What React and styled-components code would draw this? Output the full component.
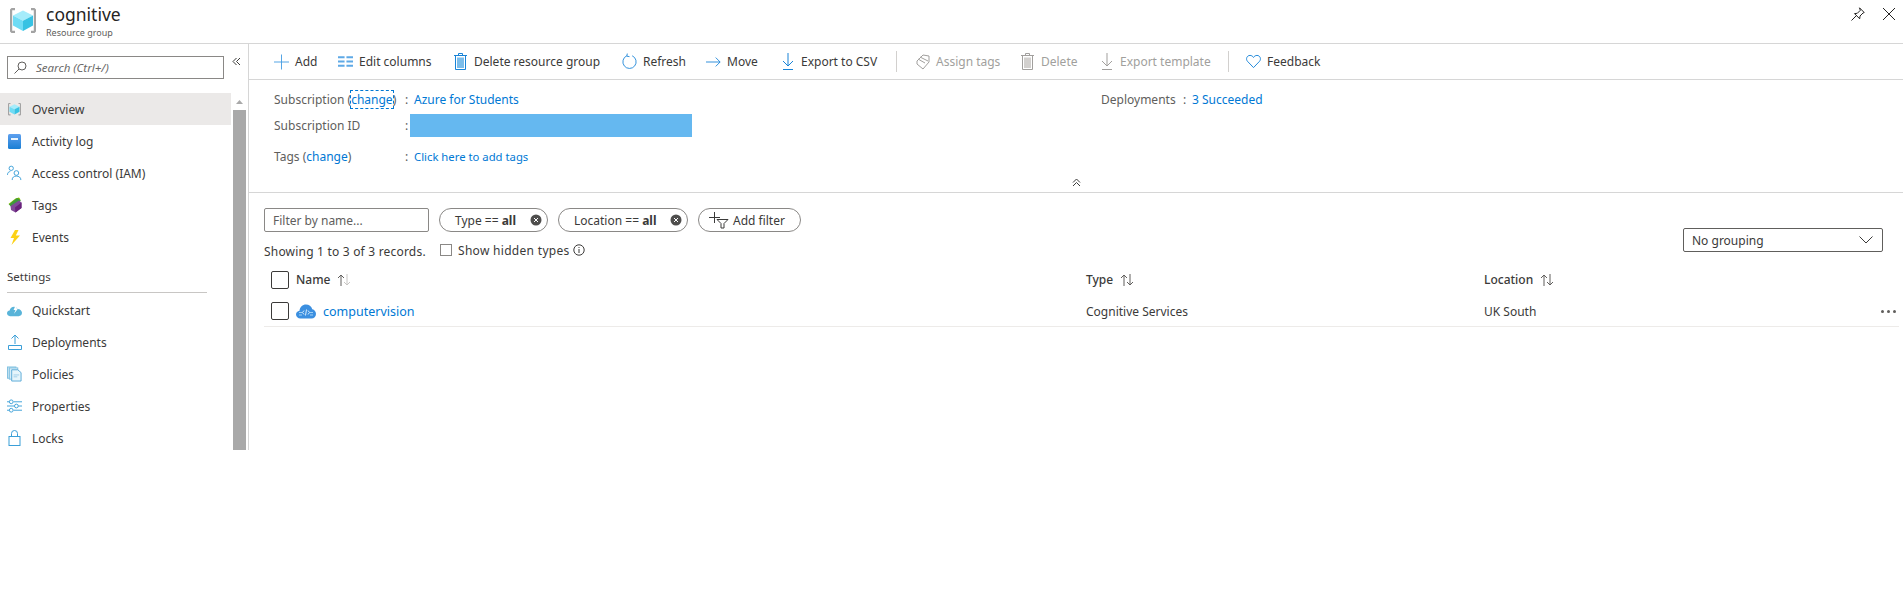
import React from "react";
import styled, { createGlobalStyle } from "styled-components";

const BLUE = "#0078d4";
const ICON = "#1883d7";

const GlobalStyle = createGlobalStyle`
  html, body {
    margin: 0;
    padding: 0;
    background: #fff;
    font-family: "Noto Sans", "Open Sans", sans-serif;
    font-size: 12px;
    color: #3b3a39;
  }
  * { box-sizing: border-box; }
`;

const Page = styled.div`
  width: 1903px;
  height: 600px;
  overflow: hidden;
`;

const Header = styled.header`
  height: 44px;
  display: flex;
  align-items: flex-start;
  padding: 7px 7px 0 8px;
  border-bottom: 1px solid #d6d6d6;
`;

const TitleBlock = styled.div`
  margin-left: 8px;
  margin-top: -4px;
  flex: 1;
`;

const Title = styled.div`
  font-size: 17.5px;
  line-height: 23px;
  color: #252423;
`;

const SubTitle = styled.div`
  font-size: 9px;
  line-height: 12px;
  margin-top: 1px;
  color: #605e5c;
`;

const WindowButton = styled.button`
  border: 0;
  background: none;
  padding: 0;
  width: 14px;
  height: 14px;
  margin: 0 0 0 17px;
  display: flex;
`;

const Body = styled.div`
  display: flex;
  align-items: flex-start;
`;

const Sidebar = styled.aside`
  width: 249px;
  height: 406px;
  flex: none;
  border-right: 1px solid #d6d6d6;
  display: flex;
  flex-direction: column;
`;

const SearchRow = styled.div`
  height: 49px;
  flex: none;
  display: flex;
  align-items: flex-start;
  padding: 12px 0 0 7px;
`;

const SearchBox = styled.div`
  width: 217px;
  height: 23px;
  border: 1px solid #8a8886;
  display: flex;
  align-items: center;
  padding-left: 6px;
  gap: 9px;
  font-style: italic;
  font-size: 11.5px;
  color: #6b6a69;
`;

const Collapse = styled.div`
  margin: 1px 0 0 8px;
  display: flex;
`;

const SideBody = styled.div`
  display: flex;
  flex: 1;
  min-height: 0;
`;

const Menu = styled.nav`
  width: 231px;
  flex: none;
`;

const MenuItem = styled.div`
  height: 32px;
  display: flex;
  align-items: center;
  padding-left: 7px;
  gap: 10px;
  color: #3b3a39;
  background: ${(p) => (p.$active ? "#ebe9e8" : "transparent")};
`;

const MenuIcon = styled.span`
  width: 15px;
  height: 16px;
  display: flex;
  align-items: center;
  justify-content: center;
`;

const MenuHeading = styled.div`
  margin: 11px 24px 1px 7px;
  height: 29px;
  padding-bottom: 8px;
  display: flex;
  align-items: flex-end;
  border-bottom: 1px solid #c8c6c4;
  color: #3b3a39;
  font-size: 11.5px;
`;

const ScrollTrack = styled.div`
  width: 13px;
  margin-left: 2px;
  display: flex;
  flex-direction: column;
  align-items: center;
`;

const ScrollArrow = styled.div`
  height: 17px;
  display: flex;
  align-items: center;
`;

const ScrollThumb = styled.div`
  flex: 1;
  width: 100%;
  background: #a9a9a9;
`;

const Main = styled.main`
  flex: 1;
  min-width: 0;
`;

const Toolbar = styled.div`
  height: 36px;
  display: flex;
  align-items: center;
  padding-left: 25px;
  border-bottom: 1px solid #d6d6d6;
`;

const Tool = styled.div`
  width: ${(p) => p.$w}px;
  flex: none;
  display: flex;
  align-items: center;
  gap: 6px;
  white-space: nowrap;
  color: ${(p) => (p.$disabled ? "#a19f9d" : "#3b3a39")};
`;

const ToolIcon = styled.span`
  width: 15px;
  height: 17px;
  display: flex;
  align-items: center;
  justify-content: center;
  flex: none;
`;

const ToolDivider = styled.div`
  width: 1px;
  height: 21px;
  background: #d2d0ce;
  flex: none;
  margin-right: ${(p) => p.$after}px;
`;

const Essentials = styled.section`
  height: 113px;
  border-bottom: 1px solid #d6d6d6;
  padding: 11px 0 0 25px;
  display: grid;
  grid-template-columns: 827px 1fr;
  position: relative;
`;

const InfoColumn = styled.div`
  display: flex;
  flex-direction: column;
`;

const InfoRow = styled.div`
  height: ${(p) => p.$h}px;
  margin-bottom: ${(p) => p.$mb || 0}px;
  display: flex;
  align-items: ${(p) => p.$align || "flex-start"};
  white-space: nowrap;
  color: #605e5c;
`;

const InfoLabel = styled.span`
  width: 131px;
  flex: none;
`;

const Colon = styled.span`
  width: 9px;
  flex: none;
`;

const Link = styled.a`
  color: ${BLUE};
  text-decoration: none;
  font-size: ${(p) => p.$size || 12}px;
`;

const FocusLink = styled(Link)`
  outline: 1px dashed ${BLUE};
  outline-offset: 0;
`;

const Redacted = styled.div`
  width: 282px;
  height: 23px;
  margin-left: -4px;
  background: #65b8f0;
`;

const DeployLabel = styled.span`
  width: 82px;
  flex: none;
`;

const CollapseRow = styled.div`
  position: absolute;
  left: 0;
  right: 0;
  bottom: 5px;
  display: flex;
  justify-content: center;
`;

const Content = styled.section`
  padding: 15px 4px 0 15px;
`;

const FilterArea = styled.div`
  display: flex;
  justify-content: space-between;
  align-items: flex-start;
  padding-right: 16px;
`;

const FilterRow = styled.div`
  display: flex;
  gap: 10px;
`;

const FilterInput = styled.div`
  width: 165px;
  height: 24px;
  border: 1px solid #8a8886;
  border-radius: 2px;
  padding-left: 8px;
  display: flex;
  align-items: center;
  color: #605e5c;
`;

const Pill = styled.div`
  width: ${(p) => p.$w}px;
  height: 24px;
  border: 1px solid #8a8886;
  border-radius: 12px;
  display: flex;
  align-items: center;
  justify-content: space-between;
  padding: 0 5px 0 15px;
  color: #3b3a39;
  white-space: nowrap;

  b { font-weight: 700; }
`;

const AddPill = styled(Pill)`
  justify-content: flex-start;
  padding: 0 0 0 10px;
  gap: 4px;
`;

const StatusRow = styled.div`
  display: flex;
  align-items: center;
  height: 20px;
  margin-top: 9px;
  white-space: nowrap;
  letter-spacing: 0.2px;
`;

const StatusText = styled.span`
  width: 176px;
  flex: none;
  color: #3b3a39;
`;

const SmallCheck = styled.span`
  width: 12px;
  height: 12px;
  flex: none;
  margin-top: -2px;
  border: 1px solid #8a8886;
  margin-right: 6px;
`;

const HiddenLabel = styled.span`
  margin-top: -2px;
  margin-right: 3px;
  letter-spacing: 0.3px;
`;

const GroupSelect = styled.div`
  width: 200px;
  height: 24px;
  margin-top: 20px;
  border: 1px solid #605e5c;
  border-radius: 2px;
  padding: 0 9px 0 8px;
  display: flex;
  align-items: center;
  justify-content: space-between;
  color: #3b3a39;
`;

const Table = styled.div`
  margin-top: 2px;
`;

const Row = styled.div`
  height: ${(p) => p.$h}px;
  display: grid;
  grid-template-columns: 815px 398px 1fr 22px;
  align-items: center;
  padding-left: 7px;
  border-bottom: ${(p) => (p.$line ? "1px solid #edebe9" : "0")};
  color: #3b3a39;
  white-space: nowrap;
`;

const NameCell = styled.div`
  display: flex;
  align-items: center;
`;

const BigCheck = styled.span`
  width: 18px;
  height: 18px;
  flex: none;
  border: 1px solid #3b3a39;
  border-radius: 2px;
  margin-right: 7px;
`;

const HeadText = styled.span`
  font-weight: 500;
  color: #3b3a39;
  margin-right: 7px;
`;

const HeadCell = styled.div`
  display: flex;
  align-items: center;
`;

const More = styled.div`
  display: flex;
  gap: 3px;
  justify-content: flex-end;
  padding-right: 3px;

  span {
    width: 3px;
    height: 3px;
    border-radius: 50%;
    background: #605e5c;
  }
`;

const RowIcon = styled.span`
  display: flex;
  margin-right: 7px;
`;

const NameLink = styled(Link)`
  font-size: 12.500px;
`;

const ResourceIcon = ({ size = 28 }) => (
  <svg width={size} height={size * 0.9} viewBox="0 0 30 27">
    <path d="M7 1H3.500L2 2.500v22L3.500 26H7v-2.200H4.200V3.200H7z" fill="#a3a3a3" />
    <path d="M23 1h3.500L28 2.500v22L26.500 26H23v-2.200h2.800V3.200H23z" fill="#a3a3a3" />
    <path d="M15 3.500l10 5-10 5.200-10-5.200z" fill="#a5ecfb" />
    <path d="M5 8.500l10 5.200v10.300l-10-5.400z" fill="#6fdcf5" />
    <path d="M25 8.500L15 13.700v10.300l10-5.400z" fill="#37c2e3" />
  </svg>
);

const BookIcon = () => (
  <svg width="13" height="15" viewBox="0 0 13 15">
    <defs>
      <linearGradient id="bookFill" x1="0" y1="0" x2="0" y2="1">
        <stop offset="0" stopColor="#5ea0ef" />
        <stop offset="1" stopColor="#1a7fd4" />
      </linearGradient>
    </defs>
    <rect width="13" height="15" rx="1.500" fill="url(#bookFill)" />
    <rect x="3" y="4" width="7" height="2" fill="#eaf4fc" />
  </svg>
);

const PeopleIcon = () => (
  <svg width="16" height="16" viewBox="0 0 16 16" fill="none" stroke="#3b9fd8">
    <circle cx="4.500" cy="3" r="2.300" />
    <path d="M0.500 10c0-2.500 1.500-3.500 3-3.500" />
    <circle cx="10" cy="8" r="2.500" />
    <path d="M5.500 15.500c0-3 2-4.200 4.500-4.200s4.800 1.200 4.800 4.200" />
  </svg>
);

const TagIcon = () => (
  <svg width="14" height="16" viewBox="0 0 14 16">
    <path d="M0.500 7L7.500 1.500 11 0.500l1.500 2L4 10z" fill="#7fba00" />
    <path d="M1 7.500L9 1l4 2.500-9 7z" fill="#3d9a3d" />
    <path d="M2.500 9L11 3.500 13.500 5.500V11L7.500 15.500 3 13z" fill="#804998" />
    <path d="M13.500 5.500V11L7.500 15.500 7 10.500z" fill="#68217a" />
  </svg>
);

const BoltIcon = () => (
  <svg width="10" height="15" viewBox="0 0 10 15">
    <path d="M5 0L0.500 8H4L1.500 15 10 5.500H5.800L8.500 0z" fill="#fcd116" />
  </svg>
);

const CloudBoltIcon = () => (
  <svg width="16" height="13" viewBox="0 0 16 13">
    <path d="M3.200 12.500C1.300 12.500 0 11.200 0 9.500S1.300 6.700 2.800 6.600C3.200 4 5.200 2.500 7.500 2.500c1.700 0 3.200 .9 4 2.300 2.500 0 4.500 1.900 4.500 4.200s-1.600 3.500-3.500 3.500z" fill="#59b4d9" />
    <path d="M9.500 0L7 6h2L7.500 10l4.500-6h-2l1.500-4z" fill="#fff" />
  </svg>
);

const UploadIcon = () => (
  <svg width="14" height="16" viewBox="0 0 14 16" fill="none" stroke="#3b9fd8">
    <path d="M7 10V1M3.500 4.500L7 1l3.500 3.500" />
    <path d="M0.500 11.500h13v4h-13z" />
  </svg>
);

const PoliciesIcon = () => (
  <svg width="16" height="16" viewBox="0 0 16 16">
    <rect x="0.500" y="0.500" width="9" height="12" fill="#c5e4f3" stroke="#7fbfe0" />
    <rect x="2.500" y="1.500" width="9" height="12" fill="#d8eef8" stroke="#7fbfe0" />
    <path d="M5 3.500h6.500l3.500 3V15.500H5z" fill="#e6f5fb" stroke="#59a9d6" />
    <path d="M7 9h6M7 11h4" stroke="#9fcde8" />
  </svg>
);

const SlidersIcon = () => (
  <svg width="16" height="14" viewBox="0 0 16 14" fill="none" stroke="#3b9fd8">
    <path d="M0 2.500h2.500M7 2.500h9M0 7h8M12 7h4M0 11.500h2.500M7 11.500h9" />
    <circle cx="4.500" cy="2.500" r="2" />
    <circle cx="10" cy="7" r="2" />
    <circle cx="4.500" cy="11.500" r="2" />
  </svg>
);

const LockIcon = () => (
  <svg width="13" height="16" viewBox="0 0 13 16" fill="none" stroke="#3b9fd8">
    <rect x="1" y="6.500" width="11" height="9" />
    <path d="M3.500 6.500V3.500a3 3 0 0 1 6 0v3" />
  </svg>
);

const PlusIcon = () => (
  <svg width="16" height="16" viewBox="0 0 16 16" stroke="#4a9fe3">
    <path d="M8 0v16M0 8h16" />
  </svg>
);

const ColumnsIcon = () => (
  <svg width="16" height="11" viewBox="0 0 16 11" stroke="#5ea9e6" strokeWidth="2">
    <path d="M0 1h7M9 1h7M0 5.500h7M9 5.500h7M0 10h7M9 10h7" />
  </svg>
);

const TrashIcon = ({ color = ICON, fill = "#7cbdea" }) => (
  <svg width="13" height="17" viewBox="0 0 13 17" fill="none" stroke={color}>
    <path d="M0 2.500h13M4.500 2.500V0.500h4v2" />
    <path d="M1.500 2.500h10v14h-10z" />
    <rect x="3" y="4.500" width="7" height="10.500" fill={fill} stroke="none" />
  </svg>
);

const RefreshIcon = () => (
  <svg width="17" height="19" viewBox="0 0 17 19" fill="none" stroke={ICON}>
    <path d="M11.500 3a7.500 7.500 0 1 1-6 0" />
    <path d="M6 0.500L5.500 3.500 8.500 4" />
  </svg>
);

const ArrowIcon = () => (
  <svg width="17" height="12" viewBox="0 0 17 12" fill="none" stroke={ICON}>
    <path d="M0 6h16M11 1l5 5-5 5" />
  </svg>
);

const DownloadIcon = ({ color = ICON }) => (
  <svg width="12" height="17" viewBox="0 0 12 17" fill="none" stroke={color}>
    <path d="M6 0v13M1 8l5 5 5-5M1 16.500h10" />
  </svg>
);

const AssignTagIcon = () => (
  <svg width="14" height="16" viewBox="0 0 14 16" fill="none" stroke="#a19f9d">
    <path d="M1 7l6-6 6 1v6l-6 7-6-5z" />
    <path d="M2 5l7 4M4 3l8 4" />
  </svg>
);

const HeartIcon = () => (
  <svg width="16" height="15" viewBox="0 0 16 15" fill="none" stroke={ICON}>
    <path d="M8 14L1.500 7.200C-.5 4.800 1 1 4.300 1 6 1 7.300 2 8 3.200 8.700 2 10 1 11.700 1c3.300 0 4.800 3.800 2.800 6.200z" />
  </svg>
);

const Search = () => (
  <svg width="13" height="13" viewBox="0 0 13 13" fill="none" stroke="#605e5c">
    <circle cx="8" cy="5" r="4" />
    <path d="M5 8l-4.500 4.500" />
  </svg>
);

const DoubleChevron = ({ up }) => (
  <svg width="9" height="9" viewBox="0 0 9 9" fill="none" stroke="#3b3a39" style={up ? undefined : { transform: "rotate(-90deg)" }}>
    <path d="M1 4.500l3.500-3.500 3.500 3.500M1 8l3.500-3.500L8 8" />
  </svg>
);

const Clear = () => (
  <svg width="12" height="12" viewBox="0 0 12 12">
    <circle cx="6" cy="6" r="5.500" fill="#4f4e4d" />
    <path d="M4 4l4 4M8 4l-4 4" stroke="#fff" />
  </svg>
);

const FilterPlus = () => (
  <svg width="20" height="17" viewBox="0 0 20 17" fill="none" stroke="#3b3a39">
    <path d="M0 5.500h11M5.500 0v11" />
    <path d="M8 7.500h11l-4 4v4.500h-3v-4.500z" />
  </svg>
);

const Info = () => (
  <svg width="12" height="12" viewBox="0 0 12 12" fill="none" stroke="#3b3a39" style={{ marginTop: -2 }}>
    <circle cx="6" cy="6" r="5.200" />
    <path d="M6 5v4M6 3v1" />
  </svg>
);

const Chevron = () => (
  <svg width="14" height="8" viewBox="0 0 14 8" fill="none" stroke="#3b3a39">
    <path d="M0.500 0.500L7 7l6.500-6.500" />
  </svg>
);

const Sort = ({ dim }) => (
  <svg width="14" height="12" viewBox="0 0 14 12" fill="none" stroke="#605e5c">
    <path d="M4 12V1M1 4l3-3 3 3" />
    <path d="M10 0v11M7 8l3 3 3-3" stroke={dim ? "#c8c6c4" : "#605e5c"} />
  </svg>
);

const CloudCode = () => (
  <svg width="20" height="15" viewBox="0 0 20 15">
    <path d="M4.500 14.500C2 14.500 0 12.800 0 10.500 0 8.500 1.500 7 3.500 6.800 3.800 3.200 6.500 .5 10 .5c3 0 5.500 2 6.300 4.800 2.200.4 3.700 2.400 3.700 4.600 0 2.600-2 4.600-4.500 4.600z" fill="#3b8fe0" />
    <path d="M3 8.500h3M14 8.500h3M3 11h3M14 11h3" stroke="#9fd0f5" fill="none" />
    <path d="M8 6.500L6.500 8.500 8 10.500M12 6.500L13.500 8.500 12 10.500M10.500 5.500L9.500 11.500" stroke="#d8ecfb" fill="none" />
  </svg>
);

const Pin = () => (
  <svg width="14" height="14" viewBox="0 0 14 14" fill="none" stroke="#252423">
    <path d="M8.500 0.800l4.700 4.700-1.200.5-3 3-.3 2.800L3.500 6.600l2.800-.3 3-3z" />
    <path d="M5.500 8.500L0.500 13.500" />
  </svg>
);

const Close = () => (
  <svg width="14" height="14" viewBox="0 0 14 14" stroke="#252423">
    <path d="M1 1l12 12M13 1L1 13" />
  </svg>
);

const topMenu = [
  ["Overview", <ResourceIcon size={16} />, true],
  ["Activity log", <BookIcon />],
  ["Access control (IAM)", <PeopleIcon />],
  ["Tags", <TagIcon />],
  ["Events", <BoltIcon />],
];

const settingsMenu = [
  ["Quickstart", <CloudBoltIcon />],
  ["Deployments", <UploadIcon />],
  ["Policies", <PoliciesIcon />],
  ["Properties", <SlidersIcon />],
  ["Locks", <LockIcon />],
];

const MenuList = ({ items }) =>
  items.map(([label, icon, active]) => (
    <MenuItem key={label} $active={active}>
      <MenuIcon>{icon}</MenuIcon>
      {label}
    </MenuItem>
  ));

export default function App() {
  return (
    <Page>
      <GlobalStyle />
      <Header>
        <ResourceIcon size={30} />
        <TitleBlock>
          <Title>cognitive</Title>
          <SubTitle>Resource group</SubTitle>
        </TitleBlock>
        <WindowButton><Pin /></WindowButton>
        <WindowButton><Close /></WindowButton>
      </Header>
      <Body>
        <Sidebar>
          <SearchRow>
            <SearchBox>
              <Search />
              Search (Ctrl+/)
            </SearchBox>
            <Collapse><DoubleChevron /></Collapse>
          </SearchRow>
          <SideBody>
            <Menu>
              <MenuList items={topMenu} />
              <MenuHeading>Settings</MenuHeading>
              <MenuList items={settingsMenu} />
            </Menu>
            <ScrollTrack>
              <ScrollArrow>
                <svg width="7" height="4" viewBox="0 0 7 4"><path d="M3.500 0L7 4H0z" fill="#a9a9a9" /></svg>
              </ScrollArrow>
              <ScrollThumb />
            </ScrollTrack>
          </SideBody>
        </Sidebar>
        <Main>
          <Toolbar>
            <Tool $w={64}><ToolIcon><PlusIcon /></ToolIcon>Add</Tool>
            <Tool $w={115}><ToolIcon><ColumnsIcon /></ToolIcon>Edit columns</Tool>
            <Tool $w={169}><ToolIcon><TrashIcon /></ToolIcon>Delete resource group</Tool>
            <Tool $w={84}><ToolIcon><RefreshIcon /></ToolIcon>Refresh</Tool>
            <Tool $w={74}><ToolIcon><ArrowIcon /></ToolIcon>Move</Tool>
            <Tool $w={116}><ToolIcon><DownloadIcon /></ToolIcon>Export to CSV</Tool>
            <ToolDivider $after={18} />
            <Tool $w={105} $disabled><ToolIcon><AssignTagIcon /></ToolIcon>Assign tags</Tool>
            <Tool $w={79} $disabled><ToolIcon><TrashIcon color="#a19f9d" fill="#d2d0ce" /></ToolIcon>Delete</Tool>
            <Tool $w={129} $disabled><ToolIcon><DownloadIcon color="#a19f9d" /></ToolIcon>Export template</Tool>
            <ToolDivider $after={17} />
            <Tool $w={90}><ToolIcon><HeartIcon /></ToolIcon>Feedback</Tool>
          </Toolbar>
          <Essentials>
            <InfoColumn>
              <InfoRow $h={23}>
                <InfoLabel>Subscription (<FocusLink>change</FocusLink>)</InfoLabel>
                <Colon>:</Colon>
                <Link>Azure for Students</Link>
              </InfoRow>
              <InfoRow $h={23} $mb={9} $align="center">
                <InfoLabel>Subscription ID</InfoLabel>
                <Colon>:</Colon>
                <Redacted />
              </InfoRow>
              <InfoRow $h={20} $align="center">
                <InfoLabel>Tags (<Link>change</Link>)</InfoLabel>
                <Colon>:</Colon>
                <Link $size={11.3}>Click here to add tags</Link>
              </InfoRow>
            </InfoColumn>
            <InfoColumn>
              <InfoRow $h={23}>
                <DeployLabel>Deployments</DeployLabel>
                <Colon>:</Colon>
                <Link>3 Succeeded</Link>
              </InfoRow>
            </InfoColumn>
            <CollapseRow><DoubleChevron up /></CollapseRow>
          </Essentials>
          <Content>
            <FilterArea>
              <div>
                <FilterRow>
                  <FilterInput>Filter by name...</FilterInput>
                  <Pill $w={109}>
                    <span>Type == <b>all</b></span>
                    <Clear />
                  </Pill>
                  <Pill $w={130}>
                    <span>Location == <b>all</b></span>
                    <Clear />
                  </Pill>
                  <AddPill $w={103}>
                    <FilterPlus />
                    Add filter
                  </AddPill>
                </FilterRow>
                <StatusRow>
                  <StatusText>Showing 1 to 3 of 3 records.</StatusText>
                  <SmallCheck />
                  <HiddenLabel>Show hidden types</HiddenLabel>
                  <Info />
                </StatusRow>
              </div>
              <GroupSelect>
                No grouping
                <Chevron />
              </GroupSelect>
            </FilterArea>
            <Table>
              <Row $h={33}>
                <HeadCell>
                  <BigCheck />
                  <HeadText>Name</HeadText>
                  <Sort dim />
                </HeadCell>
                <HeadCell><HeadText>Type</HeadText><Sort /></HeadCell>
                <HeadCell><HeadText>Location</HeadText><Sort /></HeadCell>
                <div />
              </Row>
              <Row $h={31} $line>
                <NameCell>
                  <BigCheck />
                  <RowIcon><CloudCode /></RowIcon>
                  <NameLink>computervision</NameLink>
                </NameCell>
                <div>Cognitive Services</div>
                <div>UK South</div>
                <More><span /><span /><span /></More>
              </Row>
            </Table>
          </Content>
        </Main>
      </Body>
    </Page>
  );
}
